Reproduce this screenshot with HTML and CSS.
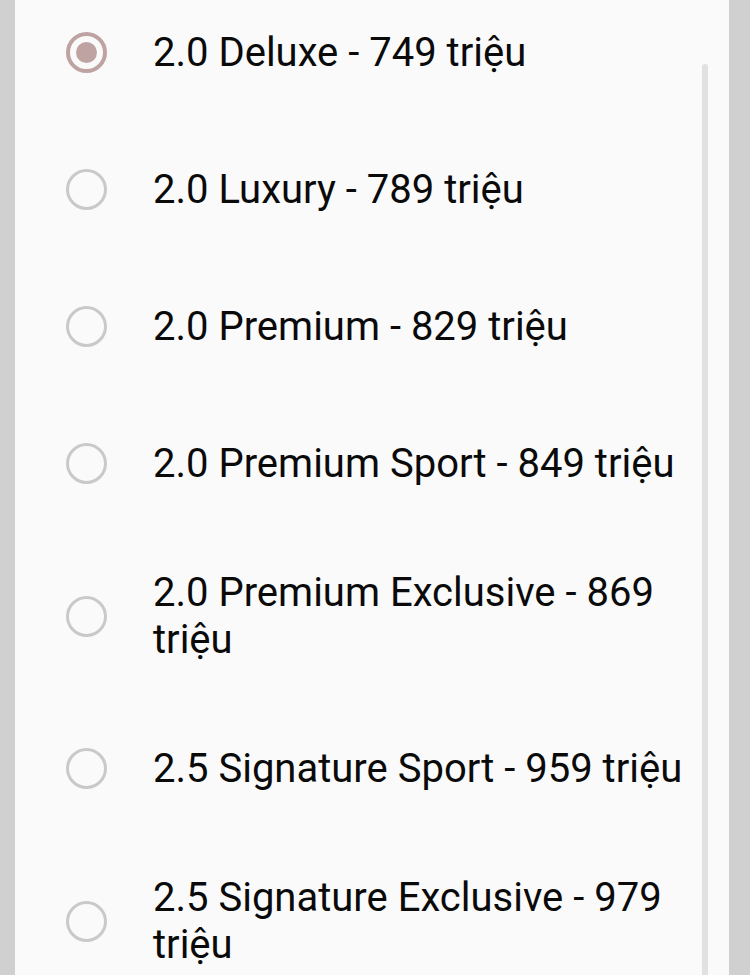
FILE: index.html
```html
<!DOCTYPE html>
<html lang="vi">
<head>
    <meta charset="UTF-8">
    <meta name="viewport" content="width=device-width, initial-scale=1.0">
    <title>Chọn phiên bản</title>
    <link rel="stylesheet" href="styles.css">
</head>
<body>
    <div class="sheet">
        <ul class="options">
            <li class="option">
                <span class="radio checked"></span>
                <span class="label">2.0 Deluxe - 749 triệu</span>
            </li>
            <li class="option">
                <span class="radio"></span>
                <span class="label">2.0 Luxury - 789 triệu</span>
            </li>
            <li class="option">
                <span class="radio"></span>
                <span class="label">2.0 Premium - 829 triệu</span>
            </li>
            <li class="option">
                <span class="radio"></span>
                <span class="label">2.0 Premium Sport - 849 triệu</span>
            </li>
            <li class="option">
                <span class="radio"></span>
                <span class="label">2.0 Premium Exclusive - 869 triệu</span>
            </li>
            <li class="option">
                <span class="radio"></span>
                <span class="label">2.5 Signature Sport - 959 triệu</span>
            </li>
            <li class="option">
                <span class="radio"></span>
                <span class="label">2.5 Signature Exclusive - 979 triệu</span>
            </li>
        </ul>
        <div class="scrollbar"></div>
    </div>
</body>
</html>
```

FILE: styles.css
```css
body {
    margin: 0;
    padding: 0 21px 0 15px;
    height: 975px;
    overflow: hidden;
    background-color: #d0d0d0;
    color: #0a0a0a;
    font-family: Roboto, "Noto Sans", sans-serif;
}

.sheet {
    position: relative;
    height: 100%;
    background: #fafafa;
    overflow: hidden;
}

.options {
    list-style: none;
    margin: -16px 0 0;
    padding: 0 40px 0 51px;
}

.option {
    display: flex;
    align-items: center;
    gap: 46px;
    min-height: 137px;
    padding: 37px 0;
    box-sizing: border-box;
}

.radio {
    flex: none;
    width: 41px;
    height: 41px;
    box-sizing: border-box;
    border: 3px solid #c9c9c9;
    border-radius: 50%;
    position: relative;
}

.radio.checked {
    border: 4px solid #bfa3a3;
}

.radio.checked::after {
    content: "";
    position: absolute;
    left: 6px;
    top: 6px;
    width: 21px;
    height: 21px;
    border-radius: 50%;
    background: #bfa3a3;
}

.label {
    font-size: 40px;
    line-height: 47px;
}

.scrollbar {
    position: absolute;
    left: 687px;
    top: 64px;
    bottom: 0;
    width: 6px;
    border-radius: 3px 3px 0 0;
    background: #e1e1e3;
}
```
